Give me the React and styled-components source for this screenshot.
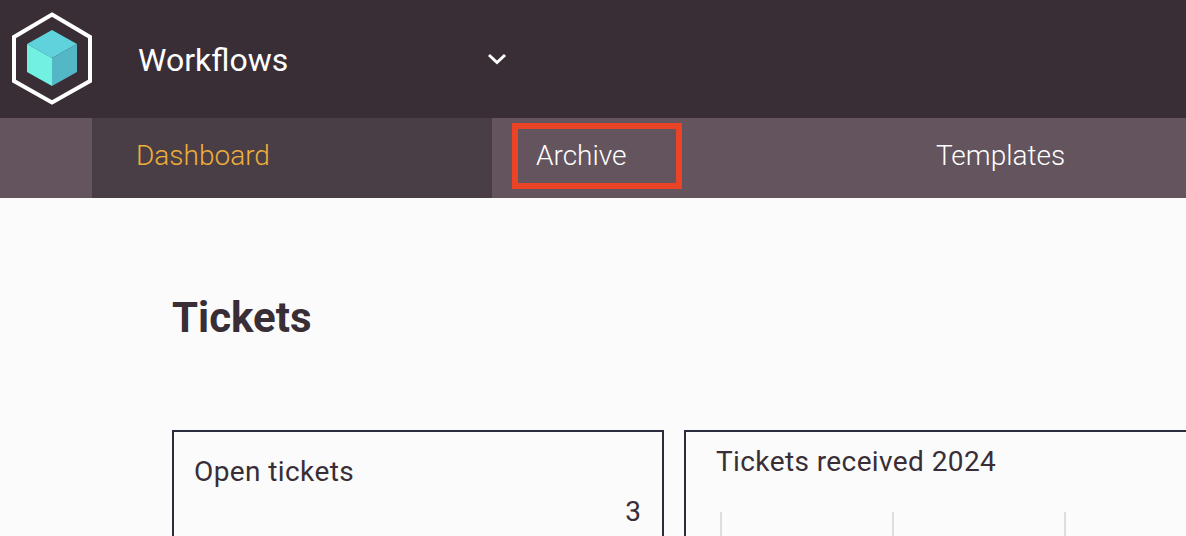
import React from "react";
import styled, { createGlobalStyle } from "styled-components";

const GlobalStyle = createGlobalStyle`
  html, body {
    margin: 0;
    padding: 0;
    height: 100%;
    overflow: hidden;
    background: #fbfbfc;
    font-family: Roboto, "Liberation Sans", sans-serif;
  }
`;

function Logo() {
  return (
    <svg width="92" height="118" viewBox="0 0 92 118">
      <polygon points="52,14.5 90,37 90,81 52,102.5 14,81 14,37" fill="none" stroke="#fff" strokeWidth="4" />
      <polygon points="52,30 77,44 52,58 27,44" fill="#5fd2dc" />
      <polygon points="27,44 52,58 52,86 27,72" fill="#72f0e2" />
      <polygon points="77,44 52,58 52,86 77,72" fill="#54b7c5" />
    </svg>
  );
}

function Chevron() {
  return (
    <svg width="20" height="14" viewBox="0 0 20 14">
      <path d="M2 3 L10 10.5 L18 3" fill="none" stroke="#fff" strokeWidth="3" />
    </svg>
  );
}

function App() {
  return (
    <Page>
      <GlobalStyle />
      <Header>
        <LogoBox>
          <Logo />
        </LogoBox>
        <Switcher>
          <AppName>Workflows</AppName>
          <Chevron />
        </Switcher>
      </Header>
      <Nav>
        <Tab $active>Dashboard</Tab>
        <Tab>
          Archive
          <Highlight />
        </Tab>
        <Tab>Templates</Tab>
      </Nav>
      <Main>
        <Title>Tickets</Title>
        <Cards>
          <StatCard>
            <StatLabel>Open tickets</StatLabel>
            <StatValue>3</StatValue>
          </StatCard>
          <ChartCard>
            <ChartTitle>Tickets received 2024</ChartTitle>
            <ChartGrid>
              <GridLine />
              <GridLine />
              <GridLine />
            </ChartGrid>
          </ChartCard>
        </Cards>
      </Main>
    </Page>
  );
}
export default App;

const Page = styled.div`
  width: 1186px;
  height: 536px;
  overflow: hidden;
`;

const Header = styled.header`
  display: flex;
  height: 118px;
  background: #392e36;
`;

const LogoBox = styled.div`
  flex: 0 0 92px;
  height: 118px;
`;

const Switcher = styled.div`
  display: flex;
  flex: 0 0 415px;
  align-items: center;
  justify-content: space-between;
  box-sizing: border-box;
  padding-left: 46px;
`;

const AppName = styled.span`
  color: #fff;
  font-size: 32px;
  font-weight: 450;
  position: relative;
  top: 1px;
`;

const Nav = styled.nav`
  display: flex;
  height: 80px;
  padding-left: 92px;
  background: #63545d;
`;

const Tab = styled.div`
  position: relative;
  display: flex;
  flex: 0 0 400px;
  align-items: center;
  box-sizing: border-box;
  padding-left: 44px;
  padding-bottom: 6px;
  font-size: 28px;
  font-weight: 300;
  color: ${(p) => (p.$active ? "#eeae3a" : "#fff")};
  background: ${(p) => (p.$active ? "#4a3e46" : "transparent")};
`;

const Highlight = styled.span`
  position: absolute;
  left: 20px;
  top: 5px;
  width: 170px;
  height: 66px;
  box-sizing: border-box;
  border: 6px solid #ea4325;
`;

const Main = styled.main`
  padding: 97px 0 0 172px;
`;

const Title = styled.h1`
  margin: 0;
  height: 135px;
  font-size: 42px;
  line-height: 46px;
  font-weight: 700;
  color: #392e36;
`;

const Cards = styled.div`
  display: flex;
  gap: 20px;
`;

const Card = styled.section`
  flex: 0 0 auto;
  box-sizing: border-box;
  height: 200px;
  border: 2px solid #2a2d3e;
  color: #392e36;
`;

const StatCard = styled(Card)`
  width: 492px;
  padding: 24px 21px 0 20px;
`;

const StatLabel = styled.div`
  font-size: 28px;
  line-height: 32px;
  letter-spacing: 0.4px;
`;

const StatValue = styled.div`
  font-size: 28px;
  line-height: 32px;
  margin-top: 8px;
  text-align: right;
`;

const ChartCard = styled(Card)`
  width: 600px;
  padding: 13px 0 0 30px;
`;

const ChartTitle = styled.div`
  font-size: 28px;
  line-height: 34px;
  letter-spacing: 0.4px;
`;

const ChartGrid = styled.div`
  display: flex;
  gap: 170px;
  margin: 33px 0 0 4px;
`;

const GridLine = styled.div`
  width: 2px;
  height: 100px;
  background: #ddd;
`;
